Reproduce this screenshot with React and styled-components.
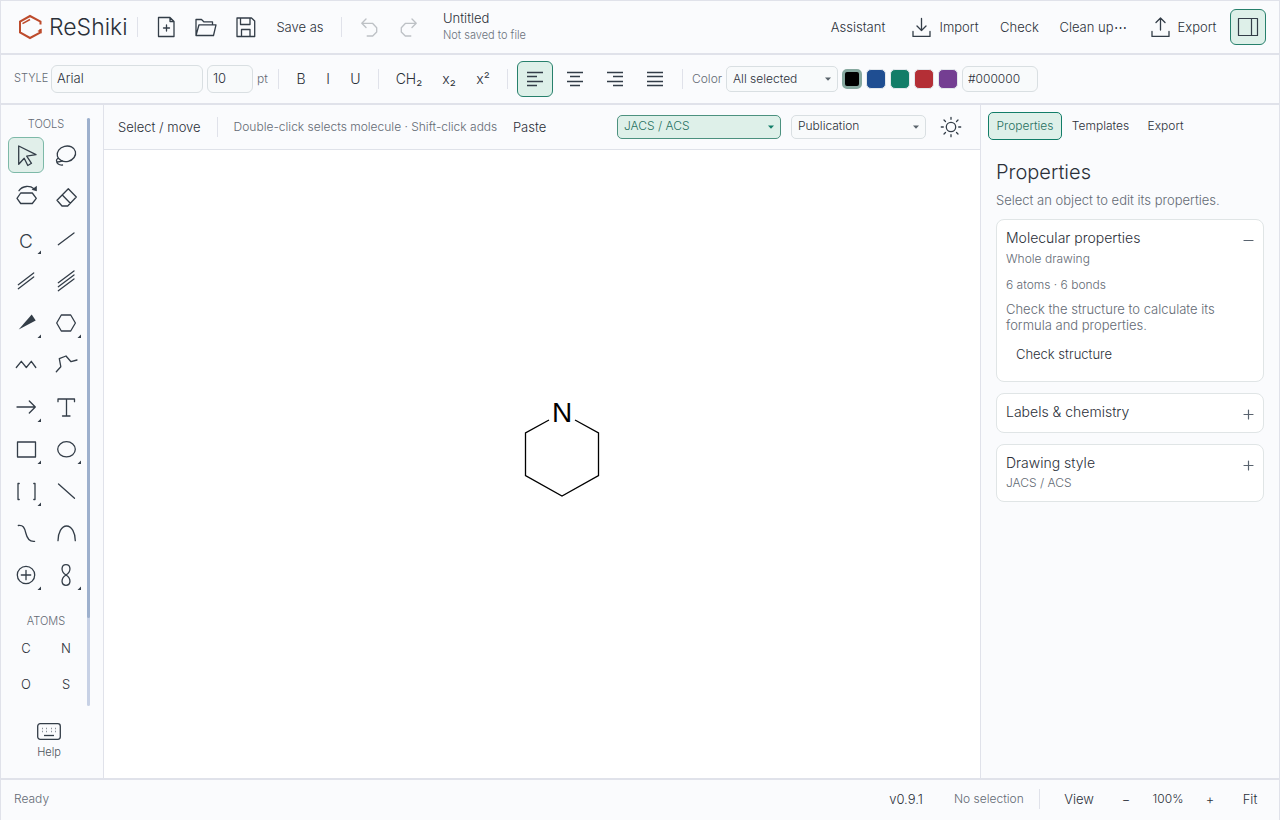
import { useState } from 'react';
import styled, { createGlobalStyle } from 'styled-components';

const GlobalStyle = createGlobalStyle`
* { box-sizing: border-box; }
html, body { margin: 0; height: 100%; }
#root { height: 100%; }
body, button, input, select {
  font-family: Inter, "Liberation Sans", sans-serif;
  font-weight: 300;
  color: #2b3039;
}
h1, h2, h3, p { margin: 0; font-weight: 300; }
`

const AppBody = styled.div`
display: flex;
flex-direction: column;
min-height: 100vh;
background: #fafbfd;
border: 1px solid #e0e2ea;
`

const Header = styled.header`
display: flex;
align-items: center;
gap: 4px;
height: 54px;
padding: 0 13px 0 16px;
border-bottom: 2px solid #e0e2ea;
`

const StyleBar = styled.div`
display: flex;
align-items: center;
gap: 4px;
height: 50px;
padding: 0 13px;
border-bottom: 2px solid #e0e2ea;
`

const Brand = styled.h1`
display: flex;
align-items: center;
gap: 6px;
width: 116px;
font-size: 23px;
line-height: 28px;
white-space: nowrap;
`

const Divider = styled.span`
flex: none;
width: 1px;
height: 20px;
margin: 0 ${props => props.$gap ?? 5}px;
background: #e0e2ea;
`

const FileActions = styled.div`
display: flex;
align-items: center;
gap: 4px;
padding-left: 6px;
`

const Spacer = styled.span`
flex: 1;
`

const IconButton = styled.button`
flex: none;
display: flex;
align-items: center;
justify-content: center;
width: 36px;
height: 36px;
padding: 0;
border: 1px solid ${props => props.$on ? '#27806c' : 'transparent'};
border-radius: 6px;
background: ${props => props.$on ? '#def0e9' : 'transparent'};
&:disabled { opacity: 0.3; }
svg { flex: none; }
`

const TextButton = styled.button`
flex: none;
display: flex;
align-items: center;
justify-content: center;
gap: 8px;
width: ${props => props.$width}px;
height: 28px;
padding: 0 0 ${props => props.$lift ?? 0}px;
border: 0;
background: transparent;
font-size: ${props => props.$size ?? 13}px;
white-space: nowrap;
`

const DocTitle = styled.div`
padding: 0 0 2px 12px;
font-size: 13px;
line-height: 17px;
`

const DocState = styled.div`
font-size: 11px;
line-height: 16px;
color: #6b727c;
`

const Caption = styled.label`
flex: none;
width: ${props => props.$width}px;
padding-bottom: 2px;
font-size: ${props => props.$size ?? 12}px;
color: #636a74;
white-space: nowrap;
`

const TextInput = styled.input`
flex: none;
width: ${props => props.$width}px;
height: ${props => props.$height ?? 28}px;
padding: 0 5px 2px;
border: 1px solid #d9dfe2;
border-radius: 6px;
background: #f8fafb;
font-size: ${props => props.$size ?? 13}px;
`

const SelectWrap = styled.span`
position: relative;
flex: none;
width: ${props => props.$width}px;
svg {
  position: absolute;
  right: 7px;
  top: 50%;
  margin-top: -2px;
  fill: ${props => props.$on ? '#127d68' : '#59636b'};
  pointer-events: none;
}
`

const Select = styled.select`
appearance: none;
display: block;
width: 100%;
height: ${props => props.$height ?? 24}px;
padding: 0 16px 2px 6px;
border: 1px solid ${props => props.$on ? '#4c917f' : '#d9dfe2'};
border-radius: 5px;
background: ${props => props.$on ? '#def0e9' : '#f8fafb'};
color: ${props => props.$on ? '#27705f' : '#2b3039'};
font-size: 12px;
`

const Swatch = styled.button`
flex: none;
width: 20px;
height: 20px;
padding: 0;
border: ${props => props.$on ? '3px solid #86a89f' : '1px solid #e3e8ec'};
border-radius: 5px;
background: ${props => props.$color};
`

const Main = styled.main`
display: flex;
flex: 1;
`

const Sidebar = styled.nav`
flex: none;
display: flex;
flex-direction: column;
width: 103px;
padding: 13px 0 0 7px;
border-right: 1px solid #e0e2ea;
border-bottom: 1px solid #e0e2ea;
`

const ToolScroller = styled.div`
display: flex;
gap: 3px;
height: 588px;
`

const ToolGrid = styled.div`
display: grid;
grid-template-columns: 36px 36px;
column-gap: 4px;
row-gap: ${props => props.$gap}px;
`

const GroupLabel = styled.h2`
height: ${props => props.$height}px;
padding-top: ${props => props.$top ?? 0}px;
font-size: 11px;
line-height: 13px;
text-align: center;
color: #636a74;
`

const ScrollTrack = styled.div`
width: 3px;
border-radius: 2px;
background: #c7d1e5;
`

const ScrollThumb = styled.div`
height: 85%;
border-radius: 2px;
background: #9db0cd;
`

const ToolButton = styled(IconButton)`
border-color: ${props => props.$on ? '#7db9a8' : 'transparent'};
background: ${props => props.$on ? '#e1efea' : 'transparent'};
font-size: 13px;
`

const HelpButton = styled.button`
display: flex;
flex-direction: column;
align-items: center;
gap: 4px;
width: 82px;
margin-top: 16px;
padding: 0;
border: 0;
background: transparent;
font-size: 11px;
line-height: 16px;
color: #4c535c;
`

const Workspace = styled.section`
flex: 1;
display: flex;
flex-direction: column;
min-width: 0;
`

const CanvasBar = styled.div`
display: flex;
align-items: center;
height: 45px;
padding: 0 14px 1px;
border-bottom: 1px solid #dfe2e9;
font-size: 13px;
white-space: nowrap;
`

const Hint = styled.span`
width: 279px;
font-size: 12px;
color: #636a74;
`

const Choices = styled.div`
display: flex;
align-items: center;
gap: 10px;
margin-left: auto;
`

const Canvas = styled.div`
flex: 1;
display: flex;
background: #ffffff;
border-bottom: 1px solid #e0e2ea;
svg { width: 100%; height: auto; }
`

const Inspector = styled.aside`
flex: none;
width: 299px;
padding: 7px;
border-left: 1px solid #e0e2ea;
border-bottom: 1px solid #e0e2ea;
`

const Tabs = styled.div`
display: flex;
gap: 2px;
`

const Tab = styled.button`
height: 28px;
width: ${props => props.$width}px;
padding: 0 0 2px;
border: 1px solid ${props => props.$on ? '#127d68' : 'transparent'};
border-radius: 5px;
background: ${props => props.$on ? '#def0e9' : 'transparent'};
color: ${props => props.$on ? '#27705f' : '#2b3039'};
font-size: 12px;
`

const InspectorBody = styled.div`
padding: 18px 8px;
`

const Heading = styled.h2`
font-size: 20px;
line-height: 28px;
`

const Lead = styled.p`
margin-bottom: 5px;
font-size: 13px;
line-height: 28px;
color: #636a74;
`

const Card = styled.section`
margin-bottom: 11px;
padding: 9px;
border: 1px solid #e0e5e6;
border-radius: 8px;
background: #ffffff;
`

const CardHead = styled.div`
display: flex;
justify-content: space-between;
height: 20px;
`

const CardTitle = styled.h3`
font-size: 14px;
line-height: 18px;
`

const Toggle = styled.button`
display: flex;
align-items: center;
width: 11px;
height: 20px;
padding: 2px 0 0;
border: 0;
background: transparent;
`

const Note = styled.p`
font-size: 12px;
line-height: ${props => props.$line ?? 20}px;
color: #636a74;
`

const Body = styled.p`
font-size: 13px;
line-height: 16px;
color: #636a74;
`

const CardAction = styled.div`
padding: 7px 0 4px;
`

const Footer = styled.footer`
display: flex;
align-items: center;
height: 41px;
padding: 0 12px 3px 13px;
border-top: 1px solid #e0e2ea;
font-size: 12px;
`

const Muted = styled.span`
width: ${props => props.$width}px;
color: #636a74;
`

const Line = ({ size = 36, children, ...rest }) => (
  <svg width={size} height={size} viewBox={`0 0 ${size} ${size}`} fill="none" stroke="#333d48" strokeWidth="1.3" strokeLinejoin="round" strokeLinecap="round" aria-hidden="true" {...rest}>
    {children}
  </svg>
)

const Caret = () => <svg width="6" height="4" viewBox="0 0 6 4"><path d="M0 0.5h6L3 3.7z" /></svg>

const Corner = () => <path d="M33 29.5v3.5h-3.5z" fill="#333d48" stroke="none" />

const tools = [
  { name: 'Select', art: <path d="M10.7 9L28 17.6l-9.3 1.5 4.8 7.2-3.7 2.2-3.6-7.2-5.5 6z" /> },
  { name: 'Lasso', art: <><ellipse cx="18.4" cy="16.8" rx="9.3" ry="7.7" transform="rotate(-14 18.4 16.8)" /><path d="M9.7 21.5c-2 1.5-1.4 3.5.6 3.3 1.7-.2 3-.3 4.2-.8M8.5 23.5c0 3.2 2.5 4.8 6 4.5" /></> },
  { name: 'Rotate', art: <><path d="M9 19.3l3.7-5.3h11.6l4 5.3-4 5.2H12.7zM11 11.7c3.6-5.3 11-5.2 15-2" /><path d="M28.8 6.8v5.4l-5.2-1.4z" fill="#333d48" stroke="none" /></> },
  { name: 'Eraser', art: <path d="M20.3 9.7l8 8.3-8.6 9H14l-5-5.7zM14.3 16l8 8.3" /> },
  { name: 'Atom', more: true, art: <text x="18" y="27" textAnchor="middle" fontSize="19" fill="#333d48" stroke="none">C</text> },
  { name: 'Single bond', art: <path d="M10.3 23.7L26 12" /> },
  { name: 'Double bond', art: <path d="M10.3 21.7L25.7 10M10.3 25.7L25.7 14" /> },
  { name: 'Triple bond', art: <path d="M10.3 19.7L26 8M10.3 23.7L26 12M10.3 27.7L26 16" /> },
  { name: 'Wedge bond', more: true, art: <path d="M10.7 24.5l13-15 4 6z" fill="#333d48" stroke="none" /> },
  { name: 'Ring', more: true, art: <path d="M8.7 18l4.6-8h9.4l4.7 8-4.7 8h-9.4z" /> },
  { name: 'Chain', art: <path d="M8.3 20.5l5-6.2 5 6.2 5-6.2 4.5 6.2" /> },
  { name: 'Freehand chain', art: <path d="M8.3 24.7l4.5-5-1.5-8L18 9l5 5.7 6-1.7" /> },
  { name: 'Arrow', more: true, art: <path d="M9 18h18.3M21.3 12l6 6-6 6" /> },
  { name: 'Text', art: <path d="M10 12.7V10h16.5v2.7M18.5 10v17M14.5 27h7.5" /> },
  { name: 'Rectangle', more: true, art: <path d="M9.5 11h18v15h-18z" /> },
  { name: 'Ellipse', more: true, art: <ellipse cx="18.5" cy="18.3" rx="8.8" ry="7.6" /> },
  { name: 'Brackets', more: true, art: <path d="M11.2 10.5H10v16h1.2M25.8 10.5H27v16h-1.2" /> },
  { name: 'Line', art: <path d="M10.5 11l16 14.3" /> },
  { name: 'Curve', art: <path d="M10.3 10.5c5-.5 6.2 2 7.5 7.5s3.5 9 8.8 8.3" /> },
  { name: 'Arc', art: <path d="M10 25.7c0-8 3.5-14.7 8.6-14.7s8.7 6.7 8.7 14.7" /> },
  { name: 'Charge', more: true, art: <><circle cx="18" cy="18" r="8.7" /><path d="M13.3 18h9.4M18 13.3v9.4" /></> },
  { name: 'Orbital', more: true, art: <path d="M18 18c-6-4-4.5-10.3 0-10.3s6 6.3 0 10.3c-6 4-4.5 10.3 0 10.3s6-6.3 0-10.3z" /> },
]

const swatches = ['#000000', '#1f4e92', '#127d68', '#b42f36', '#743e92']

const aligns = [
  { name: 'Align left', d: 'M10 11.5h16M10 15.5h10M10 20.5h16M10 24.5h10' },
  { name: 'Align center', d: 'M10 11.5h16M13 15.5h10M10 20.5h16M13 24.5h10' },
  { name: 'Align right', d: 'M10 11.5h16M16 15.5h10M10 20.5h16M16 24.5h10' },
  { name: 'Justify', d: 'M10 11.5h16M10 15.5h16M10 20.5h16M10 24.5h16' },
]

function Dropdown({ label, width, height, on, options }) {
  return (
    <SelectWrap $width={width} $on={on}>
      <Select aria-label={label} $height={height} $on={on}>
        {options.map(option => <option key={option}>{option}</option>)}
      </Select>
      <Caret />
    </SelectWrap>
  )
}

function PropertyCard({ title, open, children }) {
  return (
    <Card>
      <CardHead>
        <CardTitle>{title}</CardTitle>
        <Toggle aria-label={title} aria-expanded={!!open}>
          <Line size={11} stroke="#59636f" strokeWidth="1.2">
            <path d={open ? 'M1 5.5h9' : 'M1 5.5h9M5.5 1v9'} />
          </Line>
        </Toggle>
      </CardHead>
      {children}
    </Card>
  )
}

function App() {

  const [tool, setTool] = useState('Select')
  const [align, setAlign] = useState('Align left')
  const [color, setColor] = useState('#000000')
  const [tab, setTab] = useState('Properties')

  return (
    <AppBody>
      <GlobalStyle />
      <Header>
        <Brand>
          <Line size={26} stroke="#bd4b2c" strokeWidth="2" strokeLinejoin="miter" strokeLinecap="butt">
            <path d="M23.5 10.5v-3L13 2 3 7.5v11L13 24l10.5-5.5V15" />
            <path d="M5.5 9.7L13 5.5" strokeWidth="1.5" />
            <path d="M24.5 14.5v5l-4-2.5z" fill="#bd4b2c" stroke="none" />
          </Line>
          ReShiki
        </Brand>
        <Divider $gap={0} />
        <FileActions>
          <IconButton aria-label="New">
            <Line><path d="M10.5 8.5H22l4 4v15H10.5zM22 8.5v4h4M15.5 19h6M18.5 16v6" /></Line>
          </IconButton>
          <IconButton aria-label="Open">
            <Line><path d="M8 26.5v-16h5.5l2.3 2.3h8.7v3M8 26.5l3-10.7h17l-2.5 10.7z" /></Line>
          </IconButton>
          <IconButton aria-label="Save">
            <Line><path d="M9 9h14.5l3.2 3v15.5H9zM12.5 9v6.5H22V9M13.5 27.5v-7H22v7" /></Line>
          </IconButton>
          <TextButton $width={64}>Save as</TextButton>
        </FileActions>
        <Divider />
        <IconButton aria-label="Undo" disabled>
          <Line><path d="M15 10l-4.2 4.3 4.2 4.2M11 14.3h10.5l4.2 4.5V23l-4 4h-5.5" /></Line>
        </IconButton>
        <IconButton aria-label="Redo" disabled>
          <Line><path d="M21 10l4.2 4.3-4.2 4.2M25 14.3H14.5l-4.2 4.5V23l4 4h5.5" /></Line>
        </IconButton>
        <DocTitle>
          Untitled
          <DocState>Not saved to file</DocState>
        </DocTitle>
        <Spacer />
        <TextButton $width={78}>Assistant</TextButton>
        <TextButton $width={88}>
          <Line size={20}><path d="M2 14.5v5h17v-5M10.5 1.5v12M6 9l4.5 4.5L15 9" /></Line>
          Import
        </TextButton>
        <TextButton $width={53}>Check</TextButton>
        <TextButton $width={86}>Clean up⋯</TextButton>
        <TextButton $width={86}>
          <Line size={20}><path d="M2 14.5v5h17v-5M10.5 13V1M6 5.5L10.5 1 15 5.5" /></Line>
          Export
        </TextButton>
        <IconButton $on aria-label="Toggle panel">
          <Line strokeWidth="1.2"><path d="M8.5 9.5h19v17h-19zM21.5 9.5v17" /></Line>
        </IconButton>
      </Header>

      <StyleBar>
        <Caption $width={33} $size={11} htmlFor="font">STYLE</Caption>
        <TextInput id="font" $width={152} defaultValue="Arial" />
        <TextInput $width={46} aria-label="Font size" defaultValue="10" />
        <Caption $width={12} as="span">pt</Caption>
        <Divider />
        <TextButton $width={26} $size={14} $lift={2}>B</TextButton>
        <TextButton $width={20} $size={14} $lift={2}>I</TextButton>
        <TextButton $width={27} $size={14} $lift={2}>U</TextButton>
        <Divider />
        <TextButton $width={42} $size={14} $lift={2}>CH₂</TextButton>
        <TextButton $width={30} $size={14} $lift={2}>x₂</TextButton>
        <TextButton $width={30} $size={14} $lift={2}>x²</TextButton>
        <Divider />
        {aligns.map(item => (
          <IconButton key={item.name} aria-label={item.name} $on={align === item.name} onClick={() => setAlign(item.name)}>
            <Line strokeLinecap="butt"><path d={item.d} /></Line>
          </IconButton>
        ))}
        <Divider />
        <Caption $width={30} as="span">Color</Caption>
        <Dropdown label="Color scope" width={112} height={26} options={['All selected', 'Atoms', 'Bonds']} />
        {swatches.map(value => (
          <Swatch key={value} aria-label={value} $color={value} $on={color === value} onClick={() => setColor(value)} />
        ))}
        <TextInput $width={76} $height={26} $size={12} aria-label="Hex color" value={color} onChange={event => setColor(event.target.value)} />
      </StyleBar>

      <Main>
        <Sidebar>
          <ToolScroller>
            <div>
              <GroupLabel $height={19}>TOOLS</GroupLabel>
              <ToolGrid $gap={6}>
                {tools.map(item => (
                  <ToolButton key={item.name} aria-label={item.name} $on={tool === item.name} onClick={() => setTool(item.name)}>
                    <Line>{item.art}{item.more && <Corner />}</Line>
                  </ToolButton>
                ))}
              </ToolGrid>
              <GroupLabel $height={37} $top={22}>ATOMS</GroupLabel>
              <ToolGrid $gap={0}>
                {['C', 'N', 'O', 'S'].map(atom => <ToolButton key={atom}>{atom}</ToolButton>)}
              </ToolGrid>
            </div>
            <ScrollTrack><ScrollThumb /></ScrollTrack>
          </ToolScroller>
          <HelpButton>
            <svg width="24" height="18" viewBox="0 0 24 18" fill="none" stroke="#333d48" strokeWidth="1.3" aria-hidden="true">
              <rect x="0.7" y="1.7" width="22.6" height="15.6" rx="2.5" />
              <path d="M5 6.5h1M9 6.5h1M14 6.5h1M18 6.5h1M5 9.5h1M9 9.5h1M14 9.5h1M18 9.5h1" stroke="#8c939b" />
              <path d="M7 13.5h10" />
            </svg>
            Help
          </HelpButton>
        </Sidebar>

        <Workspace>
          <CanvasBar>
            Select / move
            <Divider $gap={16} />
            <Hint>Double-click selects molecule · Shift-click adds</Hint>
            <TextButton $width={34}>Paste</TextButton>
            <Choices>
              <Dropdown label="Drawing style" width={164} on options={['JACS / ACS', 'Nature', 'RSC']} />
              <Dropdown label="Preset" width={135} options={['Publication', 'Slides']} />
              <TextButton $width={30} aria-label="Theme">
                <Line size={22}>
                  <circle cx="11" cy="11" r="4.7" />
                  <path d="M11 1.3v2M11 18.7v2M1.3 11h2M18.7 11h2M4 4l1.5 1.5M16.5 16.5L18 18M4 18l1.5-1.5M16.5 5.5L18 4" />
                </Line>
              </TextButton>
            </Choices>
          </CanvasBar>
          <Canvas>
            <svg viewBox="0 0 876 628" role="img" aria-label="Piperidine">
              <path d="M445 270l-23.5 13v42.5L458 346l36.5-20.5V283L471 270" fill="none" stroke="#000" strokeWidth="1.3" />
              <text x="458" y="272" textAnchor="middle" fontFamily="Liberation Sans" fontWeight="400" fontSize="28" fill="#000">N</text>
            </svg>
          </Canvas>
        </Workspace>

        <Inspector>
          <Tabs role="tablist">
            {[['Properties', 74], ['Templates', 73], ['Export', 53]].map(([name, width]) => (
              <Tab key={name} role="tab" aria-selected={tab === name} $width={width} $on={tab === name} onClick={() => setTab(name)}>{name}</Tab>
            ))}
          </Tabs>
          <InspectorBody>
            <Heading>Properties</Heading>
            <Lead>Select an object to edit its properties.</Lead>
            <PropertyCard title="Molecular properties" open>
              <Note>Whole drawing</Note>
              <Note $line={32}>6 atoms · 6 bonds</Note>
              <Body>Check the structure to calculate its formula and properties.</Body>
              <CardAction>
                <TextButton $width={116}>Check structure</TextButton>
              </CardAction>
            </PropertyCard>
            <PropertyCard title="Labels & chemistry" />
            <PropertyCard title="Drawing style">
              <Note $line={18}>JACS / ACS</Note>
            </PropertyCard>
          </InspectorBody>
        </Inspector>
      </Main>

      <Footer>
        <Muted>Ready</Muted>
        <Spacer />
        <TextButton $width={96}>v0.9.1</TextButton>
        <Muted $width={70}>No selection</Muted>
        <Divider $gap={15} />
        <TextButton $width={48}>View</TextButton>
        <TextButton $width={46} aria-label="Zoom out">−</TextButton>
        <TextButton $width={38} $size={12}>100%</TextButton>
        <TextButton $width={46} aria-label="Zoom in">+</TextButton>
        <TextButton $width={34}>Fit</TextButton>
      </Footer>
    </AppBody>
  );
}

export default App;
